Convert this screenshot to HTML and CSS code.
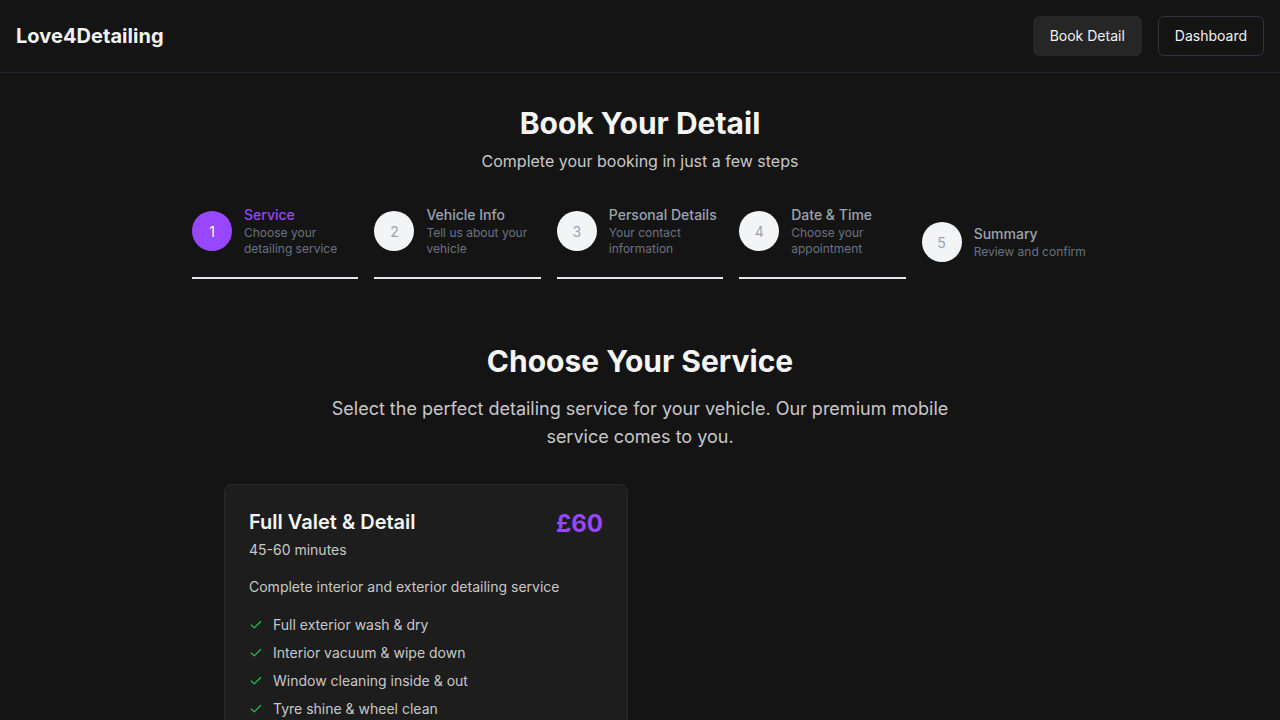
FILE: index.html
```html
<!DOCTYPE html>
<html lang="en">
<head>
<meta charset="utf-8">
<title>Love4Detailing - Book Your Detail</title>
<link rel="stylesheet" href="styles.css">
</head>
<body>
<header class="topbar">
  <div class="logo">Love4Detailing</div>
  <nav class="nav">
    <a class="btn btn-solid" href="#">Book Detail</a>
    <a class="btn btn-outline" href="#">Dashboard</a>
  </nav>
</header>
<main class="main">
  <section class="intro">
    <h1 class="page-title">Book Your Detail</h1>
    <p class="page-sub">Complete your booking in just a few steps</p>
  </section>

  <ol class="steps">
    <li class="step active">
      <div class="step-row">
        <span class="step-num">1</span>
        <div class="step-text">
          <div class="step-title">Service</div>
          <div class="step-desc">Choose your detailing service</div>
        </div>
      </div>
      <div class="step-bar"></div>
    </li>
    <li class="step">
      <div class="step-row">
        <span class="step-num">2</span>
        <div class="step-text">
          <div class="step-title">Vehicle Info</div>
          <div class="step-desc">Tell us about your vehicle</div>
        </div>
      </div>
      <div class="step-bar"></div>
    </li>
    <li class="step">
      <div class="step-row">
        <span class="step-num">3</span>
        <div class="step-text">
          <div class="step-title">Personal Details</div>
          <div class="step-desc">Your contact information</div>
        </div>
      </div>
      <div class="step-bar"></div>
    </li>
    <li class="step">
      <div class="step-row">
        <span class="step-num">4</span>
        <div class="step-text">
          <div class="step-title">Date &amp; Time</div>
          <div class="step-desc">Choose your appointment</div>
        </div>
      </div>
      <div class="step-bar"></div>
    </li>
    <li class="step">
      <div class="step-row">
        <span class="step-num">5</span>
        <div class="step-text">
          <div class="step-title">Summary</div>
          <div class="step-desc">Review and confirm</div>
        </div>
      </div>
    </li>
  </ol>

  <section class="services">
    <h2 class="section-title">Choose Your Service</h2>
    <p class="section-sub">Select the perfect detailing service for your vehicle. Our premium mobile service comes to you.</p>
    <div class="grid">
      <article class="card">
        <div class="card-head">
          <div>
            <h3 class="card-title">Full Valet &amp; Detail</h3>
            <div class="card-time">45-60 minutes</div>
          </div>
          <div class="price">£60</div>
        </div>
        <p class="card-desc">Complete interior and exterior detailing service</p>
        <ul class="features">
          <li><svg class="check" viewBox="0 0 24 24" width="14" height="14"><path d="M20 6 9 17l-5-5" fill="none" stroke="currentColor" stroke-width="2" stroke-linecap="round" stroke-linejoin="round"/></svg>Full exterior wash &amp; dry</li>
          <li><svg class="check" viewBox="0 0 24 24" width="14" height="14"><path d="M20 6 9 17l-5-5" fill="none" stroke="currentColor" stroke-width="2" stroke-linecap="round" stroke-linejoin="round"/></svg>Interior vacuum &amp; wipe down</li>
          <li><svg class="check" viewBox="0 0 24 24" width="14" height="14"><path d="M20 6 9 17l-5-5" fill="none" stroke="currentColor" stroke-width="2" stroke-linecap="round" stroke-linejoin="round"/></svg>Window cleaning inside &amp; out</li>
          <li><svg class="check" viewBox="0 0 24 24" width="14" height="14"><path d="M20 6 9 17l-5-5" fill="none" stroke="currentColor" stroke-width="2" stroke-linecap="round" stroke-linejoin="round"/></svg>Tyre shine &amp; wheel clean</li>
          <li><svg class="check" viewBox="0 0 24 24" width="14" height="14"><path d="M20 6 9 17l-5-5" fill="none" stroke="currentColor" stroke-width="2" stroke-linecap="round" stroke-linejoin="round"/></svg>Dashboard &amp; trim conditioning</li>
        </ul>
      </article>
    </div>
  </section>
</main>
</body>
</html>
```

FILE: styles.css
```css
* { box-sizing: border-box; }
html, body { margin: 0; padding: 0; }
body {
  background: #141414;
  color: #f5f5f5;
  font-family: Inter, "Noto Sans", sans-serif;
  min-height: 720px;
}
.topbar {
  height: 73px;
  display: flex;
  align-items: center;
  justify-content: space-between;
  padding: 0 16px 1px;
  border-bottom: 1px solid #1d2633;
}
.logo {
  font-size: 20px;
  font-weight: 700;
  color: #f2f2f2;
  letter-spacing: 0.05px;
}
.nav { display: flex; gap: 16px; }
.btn {
  display: inline-flex;
  align-items: center;
  height: 40px;
  padding: 0 16px;
  border-radius: 6px;
  font-size: 14px;
  color: #f2f2f2;
  text-decoration: none;
}
.btn-solid { background: #262626; border: 1px solid #262626; }
.btn-outline { border: 1px solid #2c3542; background: transparent; }

.main { padding: 32px 0 0; }
.intro { text-align: center; }
.page-title {
  margin: 0;
  font-size: 30px;
  line-height: 36px;
  font-weight: 700;
  color: #f5f5f5;
}
.page-sub {
  margin: 8px 0 0;
  font-size: 16px;
  line-height: 24px;
  color: #c8c8c8;
}

.steps {
  list-style: none;
  margin: 32px auto 0;
  padding: 0;
  width: 896px;
  display: flex;
  align-items: center;
  gap: 16px;
}
.step { flex: 1; min-width: 0; }
.step-row { display: flex; align-items: center; gap: 12px; }
.step-num {
  flex: none;
  width: 40px;
  height: 40px;
  border-radius: 50%;
  background: #f3f4f6;
  color: #9ca3af;
  font-size: 14px;
  display: flex;
  align-items: center;
  justify-content: center;
}
.step.active .step-num { background: #9747ff; color: #fff; }
.step-title { font-size: 14px; line-height: 20px; font-weight: 500; color: #9ca3af; }
.step.active .step-title { color: #9747ff; }
.step-desc { font-size: 12px; line-height: 16px; color: #6b7280; }
.step-bar { height: 2px; background: #e5e7eb; margin-top: 20px; }

.services { margin-top: 64px; text-align: center; }
.section-title {
  margin: 0;
  font-size: 30px;
  line-height: 36px;
  font-weight: 700;
  color: #f5f5f5;
}
.section-sub {
  margin: 16px auto 0;
  max-width: 640px;
  font-size: 18px;
  line-height: 28px;
  color: #c8c8c8;
}
.grid {
  width: 832px;
  margin: 33px auto 0;
  display: grid;
  grid-template-columns: 1fr 1fr;
  gap: 24px;
  text-align: left;
}
.card {
  background: #1d1d1d;
  border: 1px solid #2a2a2a;
  border-radius: 8px;
  padding: 23px 24px 24px;
}
.card-head { display: flex; justify-content: space-between; align-items: flex-start; }
.card-title {
  margin: 0;
  font-size: 20px;
  line-height: 28px;
  font-weight: 600;
  color: #f5f5f5;
}
.card-time { margin-top: 4px; font-size: 14px; line-height: 20px; color: #c8c8c8; }
.price { font-size: 24px; line-height: 32px; font-weight: 700; color: #9747ff; }
.card-desc { margin: 17px 0 0; font-size: 14px; line-height: 20px; color: #c8c8c8; }
.features { list-style: none; margin: 18px 0 0; padding: 0; display: flex; flex-direction: column; gap: 8px; }
.features li { display: flex; align-items: center; gap: 10px; font-size: 14px; line-height: 20px; color: #c8c8c8; }
.check { color: #22c55e; flex: none; }
```
